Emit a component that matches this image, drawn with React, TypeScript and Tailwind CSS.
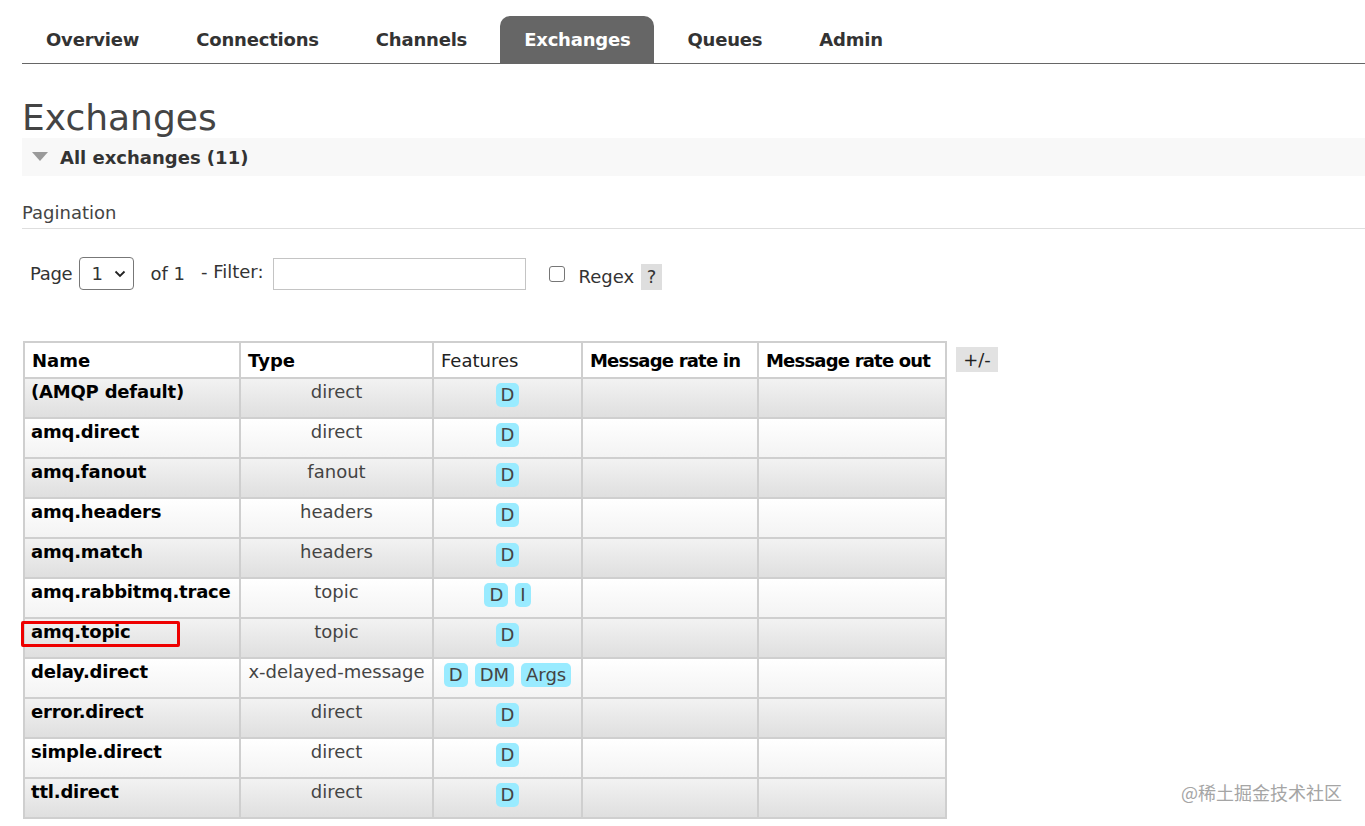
import React from "react";

type Exchange = {
  name: string;
  type: string;
  features: string[];
};

const tabs = ["Overview", "Connections", "Channels", "Exchanges", "Queues", "Admin"];

const exchanges: Exchange[] = [
  { name: "(AMQP default)", type: "direct", features: ["D"] },
  { name: "amq.direct", type: "direct", features: ["D"] },
  { name: "amq.fanout", type: "fanout", features: ["D"] },
  { name: "amq.headers", type: "headers", features: ["D"] },
  { name: "amq.match", type: "headers", features: ["D"] },
  { name: "amq.rabbitmq.trace", type: "topic", features: ["D", "I"] },
  { name: "amq.topic", type: "topic", features: ["D"] },
  { name: "delay.direct", type: "x-delayed-message", features: ["D", "DM", "Args"] },
  { name: "error.direct", type: "direct", features: ["D"] },
  { name: "simple.direct", type: "direct", features: ["D"] },
  { name: "ttl.direct", type: "direct", features: ["D"] },
];

function NavTabs() {
  return (
    <nav className="flex items-end gap-[9px] border-b border-[#666] pt-[16px] tracking-[-0.2px]">
      {tabs.map((tab) =>
        tab === "Exchanges" ? (
          <span
            key={tab}
            className="h-[47px] rounded-t-[10px] bg-[#666] px-6 text-[18px] font-bold leading-[47px] text-white"
          >
            {tab}
          </span>
        ) : (
          <span key={tab} className="h-[47px] px-6 text-[18px] font-bold leading-[47px] text-[#333]">
            {tab}
          </span>
        ),
      )}
    </nav>
  );
}

function Badge({ label }: { label: string }) {
  return (
    <span className="inline-flex h-[24px] items-center rounded-[5px] bg-[#99ebff] px-[5px] text-[18px] leading-none text-[#444]">
      {label}
    </span>
  );
}

function PaginationRow() {
  return (
    <div className="flex h-[33px] items-center pl-[8px] text-[18px] text-[#333]">
      <span className="tracking-[-0.3px]">Page</span>
      <div className="ml-[7px] flex h-[33px] w-[55px] items-center justify-between rounded-[4px] border border-[#777] bg-white pl-[11px] pr-[7px]">
        <span>1</span>
        <svg width="12" height="8" viewBox="0 0 12 8" fill="none">
          <path d="M1.5 1.5 6 6l4.5-4.5" stroke="#222" strokeWidth="1.8" />
        </svg>
      </div>
      <span className="ml-[16px]">of 1</span>
      <span className="ml-[16px] -translate-y-[2px]">- Filter:</span>
      <div className="ml-[10px] h-[32px] w-[253px] border border-[#c4c4c4] bg-white" />
      <div className="ml-[23px] h-[16px] w-[16px] rounded-[3px] border border-[#767676] bg-white" />
      <span className="ml-[13px] translate-y-[3px]">Regex</span>
      <span className="ml-[7px] flex h-[26px] w-[21px] translate-y-[3px] items-center justify-center bg-[#dedede]">?</span>
    </div>
  );
}

function ExchangeTable() {
  const cols = "grid-cols-[214px_191px_147px_174px_186px]";
  const head = "flex h-[34px] items-center whitespace-nowrap bg-white px-[7px]";
  return (
    <div className="flex items-start">
      <div className="relative">
        <div className={`grid ${cols} gap-[2px] bg-[#cfcfcf] p-[2px] text-[18px]`}>
          <div className={`${head} font-bold text-black`}>Name</div>
          <div className={`${head} font-bold text-black`}>Type</div>
          <div className={`${head} text-[#222]`}>Features</div>
          <div className={`${head} font-bold tracking-[-0.8px] text-black`}>Message rate in</div>
          <div className={`${head} font-bold tracking-[-0.8px] text-black`}>Message rate out</div>
          {exchanges.map((ex, i) => {
            const bg =
              i % 2 === 0
                ? "bg-linear-to-b from-[#f2f2f2] to-[#dfdfdf]"
                : "bg-linear-to-b from-white to-[#f3f3f3]";
            return (
              <React.Fragment key={ex.name}>
                <div className={`h-[38px] whitespace-nowrap px-[6px] pt-[2px] font-bold leading-[22px] tracking-[-0.2px] text-black ${bg}`}>
                  {ex.name}
                </div>
                <div className={`h-[38px] whitespace-nowrap px-[6px] pt-[2px] text-center leading-[22px] text-[#444] ${bg}`}>
                  {ex.type}
                </div>
                <div className={`flex h-[38px] justify-center gap-[7px] pt-[4px] ${bg}`}>
                  {ex.features.map((f) => (
                    <Badge key={f} label={f} />
                  ))}
                </div>
                <div className={`h-[38px] ${bg}`} />
                <div className={`h-[38px] ${bg}`} />
              </React.Fragment>
            );
          })}
        </div>
        <div className="absolute left-[-2px] top-[280px] h-[26px] w-[159px] rounded-[2px] border-[3px] border-[#ee0000]" />
      </div>
      <span className="ml-[9px] mt-[6px] flex h-[25px] w-[42px] items-center justify-center bg-[#e2e2e2] text-[18px] text-[#222]">
        +/-
      </span>
    </div>
  );
}

export default function App() {
  return (
    <div
      className="relative min-h-[826px] bg-white pl-[22px]"
      style={{ fontFamily: '"DejaVu Sans", Verdana, sans-serif' }}
    >
      <NavTabs />
      <h1 className="mt-[34px] text-[36px] font-normal leading-[40px] text-[#444]">Exchanges</h1>
      <div className="flex h-[38px] items-center bg-[#f8f8f8] pl-[10px]">
        <svg width="16" height="10" viewBox="0 0 16 10">
          <path d="M0 0h16L8 9z" fill="#9a9a9a" />
        </svg>
        <span className="ml-[12px] text-[18px] font-bold text-[#333]">All exchanges (11)</span>
      </div>
      <div className="mt-[26px] border-b border-[#dedede] pb-[4px] text-[18px] leading-[22px] text-[#444]">
        Pagination
      </div>
      <div className="mt-[28px]">
        <PaginationRow />
      </div>
      <div className="mt-[51px] pl-[1px]">
        <ExchangeTable />
      </div>
      <div
        className="absolute left-[1181px] top-[780px] text-[18px] leading-[24px] text-[#a5a5a5]"
        style={{ fontFamily: '"Noto Sans CJK SC", sans-serif' }}
      >
        @稀土掘金技术社区
      </div>
    </div>
  );
}
